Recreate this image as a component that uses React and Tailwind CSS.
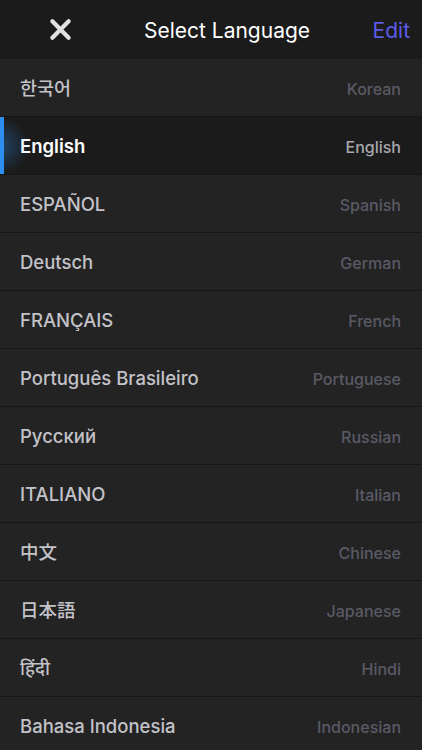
import React from 'react';

const languages = [
  { name: '한국어', en: 'Korean' },
  { name: 'English', en: 'English', active: true },
  { name: 'ESPAÑOL', en: 'Spanish' },
  { name: 'Deutsch', en: 'German' },
  { name: 'FRANÇAIS', en: 'French' },
  { name: 'Português Brasileiro', en: 'Portuguese' },
  { name: 'Русский', en: 'Russian' },
  { name: 'ITALIANO', en: 'Italian' },
  { name: '中文', en: 'Chinese' },
  { name: '日本語', en: 'Japanese' },
  { name: 'हिंदी', en: 'Hindi' },
  { name: 'Bahasa Indonesia', en: 'Indonesian' },
];

const font = "font-['Inter','Noto_Sans','Noto_Sans_CJK_KR',sans-serif]";

export default function App() {
  return (
    <div className={`h-[750px] w-[422px] overflow-hidden bg-[#232323] ${font}`}>
      {/* header */}
      <header className="flex h-[59px] items-center bg-[#1b1b1b] px-[12px]">
        <button className="flex w-[96px] items-center justify-center">
          <svg width="23" height="23" viewBox="0 0 24 24" className="text-[#e2e2e2]">
            <path d="M3.5 3.5 L20.5 20.5 M20.5 3.5 L3.5 20.5" stroke="currentColor" strokeWidth="4.4" strokeLinecap="round" />
          </svg>
        </button>
        <h1 className="flex-1 pl-[32px] pt-[2px] text-center text-[21px] leading-none text-white">Select Language</h1>
        <span className="w-[96px] pt-[2px] text-right text-[21px] leading-none text-[#5b5be8]">Edit</span>
      </header>

      <ul>
        {languages.map((l) => (
          <li
            key={l.en}
            className={`relative flex h-[58px] items-center justify-between border-b border-[#161616] pl-[20px] pr-[21px] pt-[2px] ${
              l.active ? 'bg-[#1b1b1b]' : 'bg-[#232323]'
            }`}
          >
            {l.active ? (
              <>
                <span className="absolute left-0 top-0 h-full w-[4px] bg-[#2c8ff0]" />
                <span className="pointer-events-none absolute left-0 top-0 h-full w-[30px] bg-[radial-gradient(ellipse_at_left,rgba(44,143,240,0.35),transparent_70%)]" />
              </>
            ) : null}
            <span
              className={`text-[18.5px] ${l.active ? 'font-semibold text-white' : 'font-medium text-[#c2c2c8]'}`}
            >
              {l.name}
            </span>
            <span className={`text-[16px] font-medium ${l.active ? 'text-[#a8a8ae]' : 'text-[#5a5a66]'}`}>
              {l.en}
            </span>
          </li>
        ))}
      </ul>
    </div>
  );
}
